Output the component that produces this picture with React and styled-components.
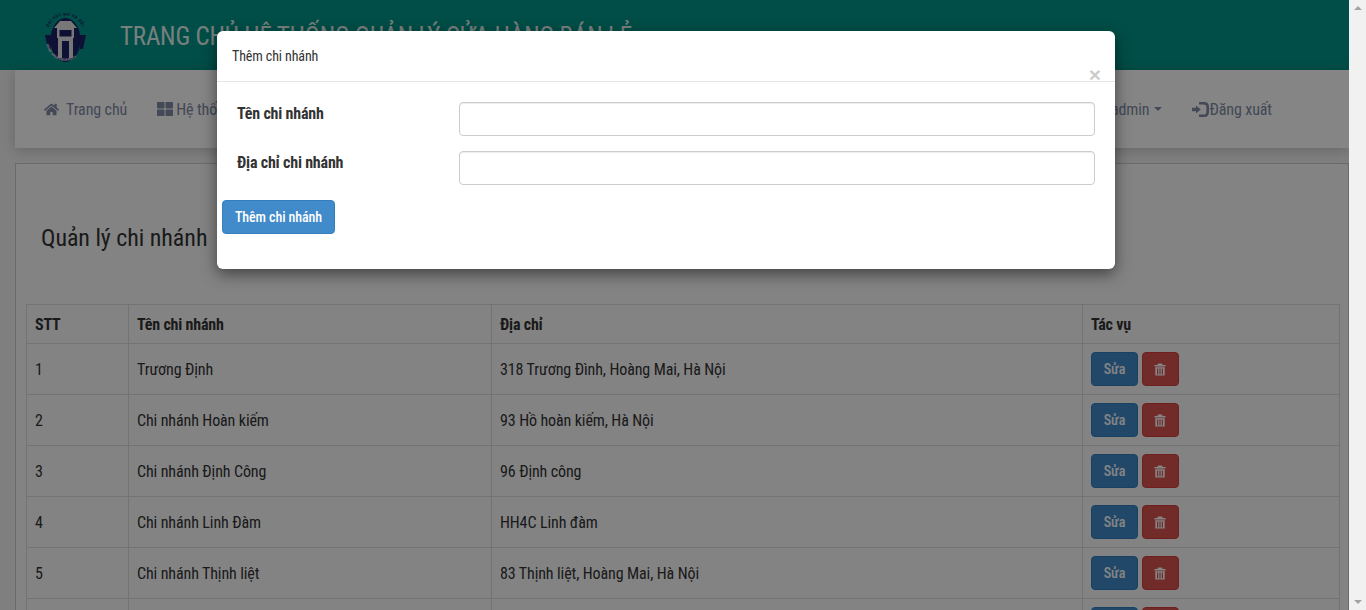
import React from 'react';
import styled, { createGlobalStyle } from 'styled-components';
import { FaHome, FaThLarge } from 'react-icons/fa';

const Global = createGlobalStyle`
  html, body { margin: 0; padding: 0; height: 100%; overflow: hidden; }
  body {
    font-family: "Roboto Condensed", Roboto, "Liberation Sans", sans-serif;
    font-stretch: 75%;
    font-size: 16px;
    letter-spacing: -0.11px;
    color: #333;
    background: #f1f1f1;
  }
  * { box-sizing: border-box; }
`;

const Shell = styled.div`
  display: flex;
  height: 610px;
  overflow: hidden;
`;

const Main = styled.div`
  position: relative;
  flex: 1;
  min-width: 0;
  height: 610px;
  overflow: hidden;
  background: #f3f3f3;
`;

const ScrollTrack = styled.div`
  width: 17px;
  background: #f1f1f1;
  display: flex;
  flex-direction: column;
  justify-content: space-between;
  align-items: center;
  padding: 6px 0;
`;

const Arrow = styled.span`
  width: 0;
  height: 0;
  border-left: 4px solid transparent;
  border-right: 4px solid transparent;
  border-${p => (p.$down ? 'top' : 'bottom')}: 4px solid #a3a3a3;
`;

const Header = styled.header`
  height: 70px;
  background: #009688;
  display: flex;
  align-items: center;
  padding-left: 44px;
  gap: 34px;
`;

const HeaderTitle = styled.h1`
  margin: 2px 0 0;
  font-size: 25px;
  letter-spacing: -0.2px;
  font-weight: 400;
  color: #fff;
  opacity: 0.9;
  white-space: nowrap;
`;

const LogoMark = styled.svg`
  flex: none;
  margin-top: 5px;
`;

const Nav = styled.nav`
  height: 78px;
  margin-left: 15px;
  padding: 0 29px;
  background: #fff;
  display: flex;
  align-items: center;
  box-shadow: 0 2px 12px rgba(0, 0, 0, 0.2);
  position: relative;
`;

const NavGroup = styled.div`
  display: flex;
  align-items: center;
  gap: ${p => p.$gap}px;
  margin-left: ${p => (p.$right ? 'auto' : '0')};
  padding-right: ${p => (p.$right ? '48px' : '0')};
`;

const NavItem = styled.a`
  display: flex;
  align-items: center;
  gap: ${p => p.$gap ?? 7}px;
  color: #808ca5;
  white-space: nowrap;
  svg { color: #808ca5; font-size: ${p => p.$icon ?? 15}px; }
`;

const Caret = styled.span`
  display: inline-block;
  margin-left: 5px;
  border-left: 4px solid transparent;
  border-right: 4px solid transparent;
  border-top: 4px solid #808ca5;
`;

const Panel = styled.section`
  margin: 15px 0 0 15px;
  border: 1px solid #ccc;
  padding: 47px 9px 0 10px;
  background: #fbfbfb;
`;

const PageTitle = styled.h2`
  margin: 0 0 39px 15px;
  font-size: 24px;
  line-height: 54px;
  font-weight: 400;
  letter-spacing: -0.05px;
  color: #333;
`;

const Table = styled.table`
  width: 1314px;
  border-collapse: collapse;
  table-layout: fixed;
`;

const Th = styled.th`
  height: 39px;
  padding: 0 8px;
  border: 1px solid #ddd;
  text-align: left;
  font-weight: 700;
  letter-spacing: -0.2px;
  color: #333;
`;

const Td = styled.td`
  height: 51px;
  padding: 0 8px;
  border: 1px solid #ddd;
  color: #333;
`;

const Actions = styled.div`
  display: flex;
  gap: 4px;
`;

const SmallButton = styled.button`
  height: 34px;
  width: ${p => (p.$danger ? 37 : 47)}px;
  padding: 0 ${p => (p.$danger ? 2 : 0)}px 0 0;
  display: flex;
  align-items: center;
  justify-content: center;
  font: inherit;
  font-size: 14px;
  font-weight: 500;
  letter-spacing: -0.1px;
  color: #fff;
  background: ${p => (p.$danger ? '#d9534f' : '#428bca')};
  border: 1px solid ${p => (p.$danger ? '#d43f3a' : '#357ebd')};
  border-radius: 4px;
`;

const Overlay = styled.div`
  position: absolute;
  inset: 0;
  background: rgba(0, 0, 0, 0.48);
  padding: 31px 0 0 217px;
`;

const Modal = styled.div`
  width: 898px;
  height: 238px;
  background: #fff;
  border-radius: 6px;
  box-shadow: 0 5px 15px rgba(0, 0, 0, 0.5);
`;

const ModalHeader = styled.div`
  height: 51px;
  padding: 0 14px 0 15px;
  border-bottom: 1px solid #e5e5e5;
  display: flex;
  justify-content: space-between;
`;

const ModalTitle = styled.h4`
  margin: 0;
  font-size: 14px;
  font-weight: 400;
  line-height: 50px;
  color: #333;
`;

const Close = styled.button`
  align-self: flex-end;
  margin: 0 0 -4px;
  padding: 0;
  border: 0;
  background: none;
  font-family: "Liberation Sans", sans-serif;
  font-size: 21px;
  line-height: 21px;
  font-weight: 700;
  color: #000;
  opacity: 0.2;
`;

const ModalBody = styled.form`
  padding: 20px 20px 0 5px;
  display: flex;
  flex-direction: column;
  gap: 15px;
  align-items: flex-start;
`;

const FormRow = styled.div`
  width: 100%;
  display: grid;
  grid-template-columns: 222px 1fr;
  padding-left: 15px;
`;

const Label = styled.label`
  font-weight: 700;
  letter-spacing: -0.2px;
  padding-top: 3px;
  line-height: 18px;
  color: #333;
`;

const Input = styled.input`
  height: 34px;
  width: 100%;
  border: 1px solid #ccc;
  border-radius: 4px;
  background: #fff;
  box-shadow: inset 0 1px 1px rgba(0, 0, 0, 0.075);
`;

const Submit = styled.button`
  height: 34px;
  width: 113px;
  font: inherit;
  font-size: 14px;
  font-weight: 500;
  letter-spacing: -0.1px;
  color: #fff;
  background: #428bca;
  border: 1px solid #357ebd;
  border-radius: 4px;
`;

const Logo = () => (
  <LogoMark width="42" height="50" viewBox="0 0 42 50">
    <defs>
      <path id="logoTop" d="M3 22 A18 19 0 0 1 40 22" />
      <path id="logoBottom" d="M2 28 A19.5 20 0 0 0 41 28" />
    </defs>
    <ellipse cx="21.5" cy="27" rx="15" ry="22" fill="#1d1f66" />
    <path d="M1 22 h6 v14 h-3z M42 22 h-6 v14 h3z" fill="#1d1f66" />
    <text fontSize="4.2" fontWeight="700" fill="#1d1f66" letterSpacing="0.5">
      <textPath href="#logoTop" startOffset="8">ĐẠI HỌC MỞ HÀ NỘI</textPath>
    </text>
    <text fontSize="3.6" fontWeight="700" fill="#d8d8e8" letterSpacing="0.1">
      <textPath href="#logoBottom" startOffset="3">HANOI OPEN UNIVERSITY</textPath>
    </text>
    <path d="M10 15 L16 8 H27 L33 15z" fill="#e4e4e4" />
    <path d="M13 15 H30 V25 H13z" fill="#e4e4e4" />
    <path d="M15.5 17 H27.5 V23.5 H15.5z" fill="#1d1f66" />
    <path d="M14 25 H18 V45 H14z M25 25 H29 V45 H25z M14 25 H29 V28 H14z" fill="#e4e4e4" />
  </LogoMark>
);

const Trash = () => (
  <svg width="12" height="13" viewBox="0 0 12 13" fill="currentColor">
    <path d="M4 0.5 H8 L8.6 2 H11.5 V3.4 H0.5 V2 H3.4z" />
    <path d="M1.3 4.2 H10.7 V12.6 H1.3z M3 5.4 V11.4 H4.2 V5.4z M5.4 5.4 V11.4 H6.6 V5.4z M7.8 5.4 V11.4 H9 V5.4z" fillRule="evenodd" />
  </svg>
);

// arrow going into a rounded bracket, as the sign-in glyph in the reference
const SignIn = () => (
  <svg width="17" height="15" viewBox="0 0 17 15" fill="currentColor">
    <path d="M0 5.8 H4 V3.4 L8.8 7.5 L4 11.6 V9.2 H0z" />
    <path d="M7 0 H12 Q17 0 17 5 V10 Q17 15 12 15 H7 V12.6 H11.5 Q14.4 12.6 14.4 9.8 V5.2 Q14.4 2.4 11.5 2.4 H7z" />
  </svg>
);

const branches = [
  ['1', 'Trương Định', '318 Trương Đình, Hoàng Mai, Hà Nội'],
  ['2', 'Chi nhánh Hoàn kiếm', '93 Hồ hoàn kiếm, Hà Nội'],
  ['3', 'Chi nhánh Định Công', '96 Định công'],
  ['4', 'Chi nhánh Linh Đàm', 'HH4C Linh đàm'],
  ['5', 'Chi nhánh Thịnh liệt', '83 Thịnh liệt, Hoàng Mai, Hà Nội'],
  ['6', 'Chi nhánh Cầu Giấy', '12 Cầu Giấy, Hà Nội'],
];

export default function App() {
  return (
    <Shell>
      <Global />
      <Main>
        <Header>
          <Logo />
          <HeaderTitle>TRANG CHỦ HỆ THỐNG QUẢN LÝ CỬA HÀNG BÁN LẺ</HeaderTitle>
        </Header>
        <Nav>
          <NavGroup $gap={30}>
            <NavItem><FaHome />Trang chủ</NavItem>
            <NavItem $gap={3} $icon={16}><FaThLarge />Hệ thống</NavItem>
          </NavGroup>
          <NavGroup $right $gap={30}>
            <NavItem $gap={0}>admin<Caret /></NavItem>
            <NavItem $gap={0}><SignIn />Đăng xuất</NavItem>
          </NavGroup>
        </Nav>
        <Panel>
          <PageTitle>Quản lý chi nhánh</PageTitle>
          <Table>
            <colgroup>
              <col style={{ width: 102 }} />
              <col style={{ width: 363 }} />
              <col style={{ width: 591 }} />
              <col />
            </colgroup>
            <thead>
              <tr>
                <Th>STT</Th>
                <Th>Tên chi nhánh</Th>
                <Th>Địa chỉ</Th>
                <Th>Tác vụ</Th>
              </tr>
            </thead>
            <tbody>
              {branches.map(([id, name, address]) => (
                <tr key={id}>
                  <Td>{id}</Td>
                  <Td>{name}</Td>
                  <Td>{address}</Td>
                  <Td>
                    <Actions>
                      <SmallButton>Sửa</SmallButton>
                      <SmallButton $danger><Trash /></SmallButton>
                    </Actions>
                  </Td>
                </tr>
              ))}
            </tbody>
          </Table>
        </Panel>
        <Overlay>
          <Modal>
            <ModalHeader>
              <ModalTitle>Thêm chi nhánh</ModalTitle>
              <Close type="button">×</Close>
            </ModalHeader>
            <ModalBody>
              <FormRow>
                <Label>Tên chi nhánh</Label>
                <Input />
              </FormRow>
              <FormRow>
                <Label>Địa chỉ chi nhánh</Label>
                <Input />
              </FormRow>
              <Submit type="button">Thêm chi nhánh</Submit>
            </ModalBody>
          </Modal>
        </Overlay>
      </Main>
      <ScrollTrack>
        <Arrow />
        <Arrow $down />
      </ScrollTrack>
    </Shell>
  );
}
